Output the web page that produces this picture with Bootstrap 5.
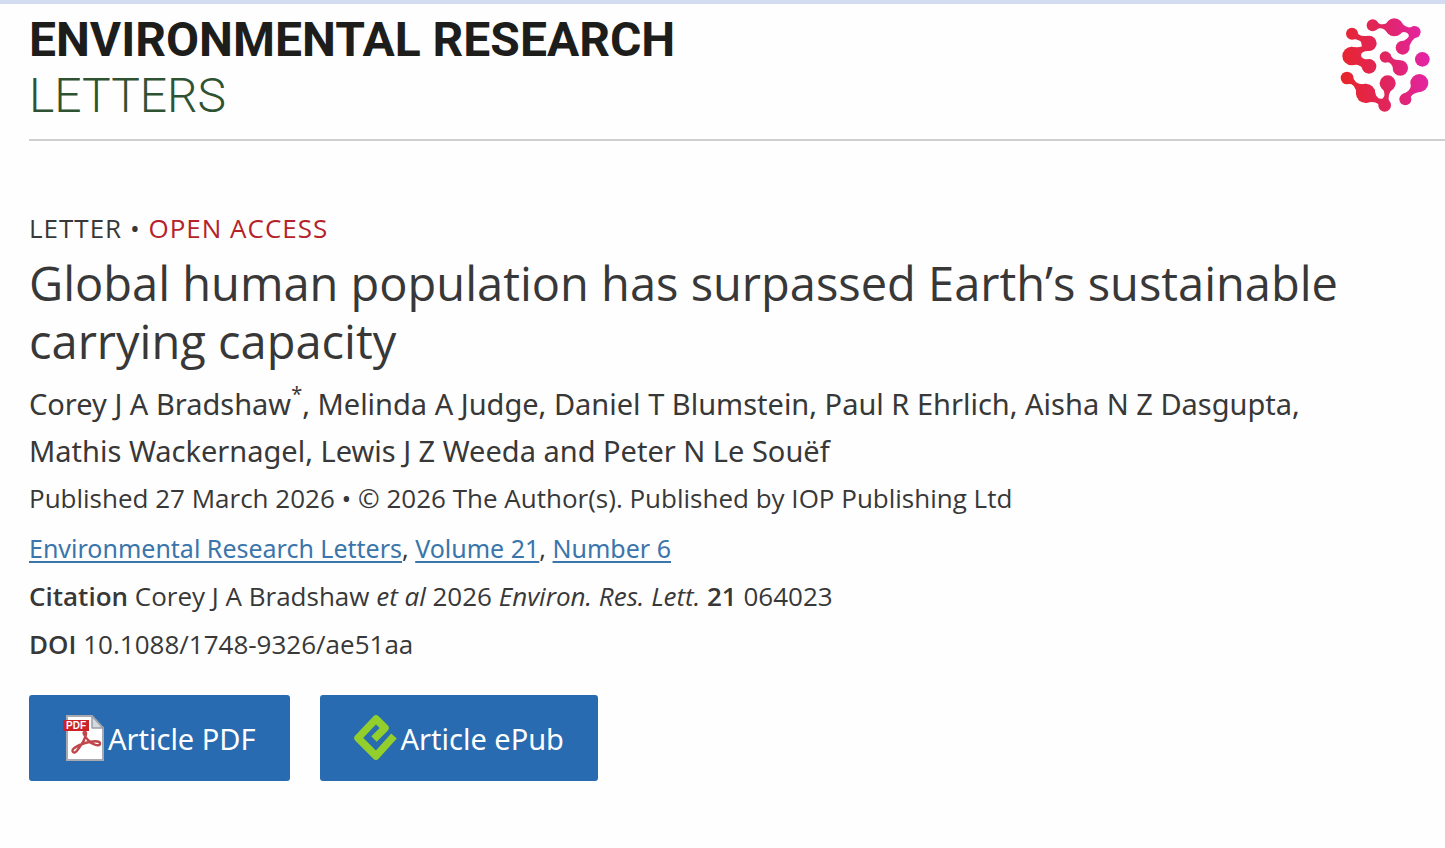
<!DOCTYPE html>
<html lang="en">
<head>
<meta charset="utf-8">
<meta name="viewport" content="width=device-width, initial-scale=1">
<title>Global human population has surpassed Earth’s sustainable carrying capacity</title>
<link rel="stylesheet" href="https://cdn.jsdelivr.net/npm/bootstrap@5.3.0/dist/css/bootstrap.min.css">
<style>
  body { font-family: "Open Sans", "Noto Sans", sans-serif; color: #383838; background: #fefefe; border-top: 4px solid #d3dcf0; font-size: 26px; line-height: 48px; }
  .page { padding-left: 29px; }
  .masthead { border-bottom: 2px solid #cfcfcf; padding: 8px 13px 15px 0; }
  .journal { font-family: Roboto, sans-serif; font-size: 48px; line-height: 56px; color: #1d1d1b; }
  .journal-sub { font-weight: 300; color: #2f5233; }
  .article { padding: 63px 64px 0 0; }
  .open-access { color: #b5222a; }
  .kicker { letter-spacing: 1px; margin-bottom: 2px; }
  .article-title { font-size: 47px; line-height: 58px; font-weight: 400; margin-bottom: 10px; }
  .authors, .issue-links, .btn-article { font-family: "Noto Sans", "Open Sans", sans-serif; }
  .authors { font-size: 29px; line-height: 47px; }
  .authors sup { font-size: 20px; line-height: 20px; top: -14px; }
  .issue-links { font-size: 25px; margin-top: 2px; }
  .issue-links a { color: #3a75ab; text-decoration-thickness: 2px; text-underline-offset: 3px; }
  .article strong { font-weight: 600; }
  .downloads { gap: 30px; margin-top: 27px; }
  .btn-article { --bs-btn-color: #fff; --bs-btn-bg: #286bb0; --bs-btn-hover-color: #fff; --bs-btn-hover-bg: #1f5892; --bs-btn-border-radius: 3px; --bs-btn-font-size: 29px; --bs-btn-padding-x: 34px; --bs-btn-padding-y: 18px; --bs-btn-line-height: 49px; gap: 3px; }
</style>
</head>
<body>
<div class="page">
  <header class="masthead d-flex justify-content-between align-items-start">
    <div class="journal"><div class="fw-bold">ENVIRONMENTAL RESEARCH</div><div class="journal-sub">LETTERS</div></div>
    <svg class="mt-1 flex-shrink-0" width="93" height="98" viewBox="42 50 279 294" role="img" aria-label="IOP Publishing">
      <defs><linearGradient id="brand" gradientUnits="userSpaceOnUse" x1="48" y1="200" x2="310" y2="170"><stop offset="0" stop-color="#e8252b"/><stop offset=".5" stop-color="#e0255f"/><stop offset="1" stop-color="#e424a8"/></linearGradient></defs>
      <g fill="url(#brand)">
        <circle cx="143" cy="78" r="18"/><circle cx="208" cy="84" r="27"/><circle cx="269" cy="98" r="18"/><circle cx="233" cy="145" r="21"/>
        <path d="M150 64Q172 84 190 67V102Q170 77 150 92ZM225 65Q245 92 267 81L280 111Q262 113 246 158L220 132Q266 112 245 100Q234 95 223 104Z"/>
        <circle cx="81" cy="103" r="18"/><circle cx="132" cy="132" r="23"/><circle cx="80" cy="170" r="28"/><circle cx="132" cy="201" r="22"/>
        <path d="M94 91Q98 114 128 109L134 155Q112 153 108 166Q107 181 137 181L122 221Q108 190 78 197V142Q116 148 112 134Q106 118 76 119Z"/>
        <circle cx="181" cy="173" r="17"/><circle cx="226" cy="206" r="23"/><path d="M195 162Q199 184 227 183L207 220Q205 184 176 188Z"/>
        <circle cx="292" cy="180" r="22"/>
        <circle cx="66" cy="236" r="19"/><circle cx="122" cy="282" r="29"/><circle cx="179" cy="318" r="19"/><circle cx="188" cy="252" r="24"/>
        <path d="M82 225Q88 261 123 253L148 270Q152 302 172 298Q184 290 174 269L203 268Q184 287 194 310L173 335Q162 299 122 311L94 286Q94 248 61 253Z"/>
        <circle cx="283" cy="251" r="27"/><circle cx="241" cy="300" r="18"/><path d="M257 243Q264 274 233 284L251 315Q251 280 289 277Z"/>
      </g>
    </svg>
  </header>
  <main class="article">
    <div class="kicker">LETTER • <span class="open-access">OPEN ACCESS</span></div>
    <h1 class="article-title">Global human population has surpassed Earth’s sustainable carrying capacity</h1>
    <p class="authors mb-0">Corey J A Bradshaw<sup>*</sup>, Melinda A Judge, Daniel T Blumstein, Paul R Ehrlich, Aisha N Z Dasgupta, Mathis Wackernagel, Lewis J Z Weeda and Peter N Le Souëf</p>
    <p class="mb-0">Published 27 March 2026 • © 2026 The Author(s). Published by IOP Publishing Ltd</p>
    <p class="issue-links mb-0"><a href="#journal">Environmental Research Letters</a>, <a href="#volume">Volume 21</a>, <a href="#issue">Number 6</a></p>
    <p class="mb-0"><strong>Citation</strong> Corey J A Bradshaw <em>et al</em> 2026 <em>Environ. Res. Lett.</em> <strong>21</strong> 064023</p>
    <p class="mb-0"><strong>DOI</strong> 10.1088/1748-9326/ae51aa</p>
    <div class="downloads d-flex flex-wrap">
      <button type="button" class="btn btn-article border-0 d-flex align-items-center">
        <svg width="42" height="48" viewBox="0 0 42 48" aria-hidden="true">
          <path d="M4 2H29L40 14V46H4Z" fill="#fff" stroke="#a9a9b2" stroke-width="2"/>
          <path d="M29 2V14H40Z" fill="#d5d9de" stroke="#99a0a8" stroke-width="1.5" stroke-linejoin="round"/>
          <rect y="6" width="26" height="11" fill="#cb2229"/>
          <text x="13" y="15" text-anchor="middle" font-family="Liberation Sans, sans-serif" font-size="10" font-weight="700" fill="#fff">PDF</text>
          <path d="M10 38C7 35 16 31 22 29C29 27 38 26 37 30C36 33 28 30 25 26C21 21 19 18 22 18C25 18 21 27 18 31C14 37 12 40 10 38Z" fill="none" stroke="#c0474b" stroke-width="2.4"/>
        </svg>
        <span>Article PDF</span>
      </button>
      <button type="button" class="btn btn-article border-0 d-flex align-items-center">
        <svg width="44" height="50" viewBox="0 0 44 50" aria-hidden="true">
          <path d="M20 26L31 15L22 6L4 25L22 43L40 23" fill="none" stroke="#93cf2c" stroke-width="7.500" stroke-linejoin="round"/>
        </svg>
        <span>Article ePub</span>
      </button>
    </div>
  </main>
</div>
<script src="https://cdn.jsdelivr.net/npm/bootstrap@5.3.0/dist/js/bootstrap.bundle.min.js"></script>
</body>
</html>
